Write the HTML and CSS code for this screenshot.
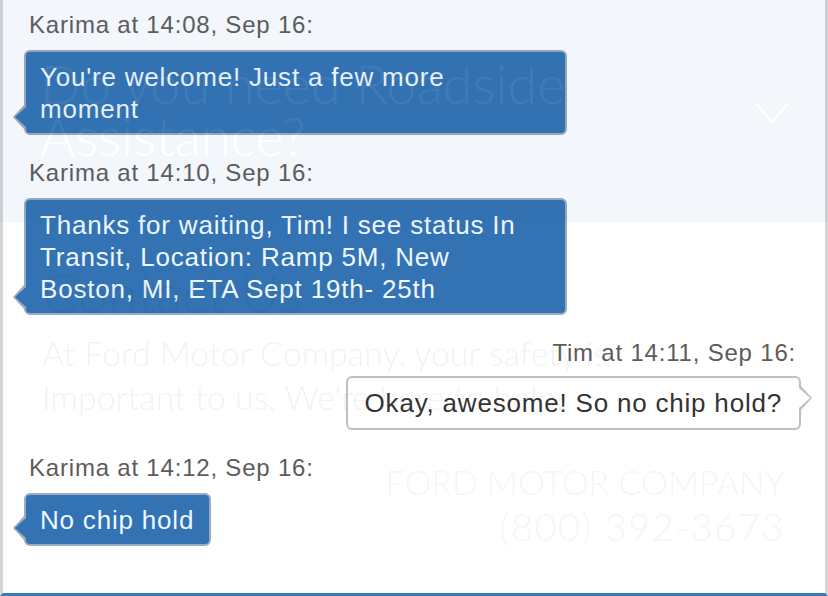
FILE: index.html
```html
<!DOCTYPE html>
<html lang="en">
<head>
  <meta charset="UTF-8" />
  <meta name="viewport" content="width=device-width, initial-scale=1.0"/>
  <title>Chat | Ford Motor Company</title>
  <link rel="stylesheet" href="styles.css">
</head>
<body>
<div class="screen">
  <main class="chat">
    <div class="msg in">
      <div class="meta">Karima at 14:08, Sep 16:</div>
      <div class="bubble">You're welcome! Just a few more moment</div>
    </div>
    <div class="msg in">
      <div class="meta">Karima at 14:10, Sep 16:</div>
      <div class="bubble">Thanks for waiting, Tim! I see status In Transit, Location: Ramp 5M, New Boston, MI, ETA Sept 19th- 25th</div>
    </div>
    <div class="msg out">
      <div class="meta">Tim at 14:11, Sep 16:</div>
      <div class="bubble">Okay, awesome! So no chip hold?</div>
    </div>
    <div class="msg in">
      <div class="meta">Karima at 14:12, Sep 16:</div>
      <div class="bubble">No chip hold</div>
    </div>
  </main>

  <!-- the page behind the chat window shows through faintly -->
  <div class="ghost" aria-hidden="true">
    <section class="ghost-hero">
      <h2>Do you need Roadside<br>Assistance?</h2>
      <svg class="chevron" width="36" height="26" viewBox="0 0 36 26">
        <polyline points="2,3 18,22 34,3" fill="none" stroke="#fff" stroke-width="2.5"/>
      </svg>
    </section>
    <section class="ghost-contact">
      <h2>Contact Us</h2>
      <p>At Ford Motor Company, your safety is<br>Important to us. We're here to help.</p>
      <div class="ghost-phone">
        <div class="company">FORD MOTOR COMPANY</div>
        <div class="phone">(800) 392-3673</div>
      </div>
    </section>
  </div>
</div>
</body>
</html>
```

FILE: styles.css
```css
* { box-sizing: border-box; margin: 0; padding: 0; }
body {
  font-family: 'Liberation Sans', Arial, sans-serif;
  background: #fff;
  color: #333;
}
.screen {
  position: relative;
  width: 828px;
  height: 596px;
  overflow: hidden;
}
.chat {
  height: 596px;
  padding: 12px 24px 0 21px;
  border-left: 3px solid #d5d5d5;
  border-right: 3px solid #d5d5d5;
  border-bottom: 3px solid #3a78b8;
  background: #fff;
}
.msg {
  display: flex;
  flex-direction: column;
  align-items: flex-start;
  margin-bottom: 25px;
}
.msg.out {
  align-items: flex-end;
}
.meta {
  font-size: 24px;
  letter-spacing: 0.8px;
  line-height: 26px;
  color: #5c5c5c;
  padding: 0 5px;
  margin-bottom: 12px;
}
.msg.out .meta {
  margin-bottom: 10px;
}
.bubble {
  position: relative;
  max-width: 543px;
  font-size: 26px;
  letter-spacing: 0.8px;
  line-height: 32px;
  padding: 9px 15px 8px 14px;
  border-radius: 6px;
}
.msg.in .bubble {
  background: #3373b3;
  border: 2px solid #9aacbd;
  color: #eef7ff;
}
.msg.out .bubble {
  background: #fff;
  border: 2px solid #bfbfbf;
  color: #333;
  padding: 9px 17px;
}

/* bubble tails */
.bubble::before,
.bubble::after {
  content: "";
  position: absolute;
  width: 0;
  height: 0;
  border-style: solid;
  border-color: transparent;
}
.msg.in .bubble::before {
  left: -13px;
  bottom: 4px;
  border-width: 12px 11px 12px 0;
  border-right-color: #9aacbd;
}
.msg.in .bubble::after {
  left: -11px;
  bottom: 6px;
  border-width: 10px 11px 10px 0;
  border-right-color: #3373b3;
}
.msg.out .bubble::before {
  right: -13px;
  top: 8px;
  border-width: 12px 0 12px 11px;
  border-left-color: #bfbfbf;
}
.msg.out .bubble::after {
  right: -11px;
  top: 10px;
  border-width: 10px 0 10px 11px;
  border-left-color: #fff;
}

/* faint website behind the chat */
.ghost {
  position: absolute;
  inset: 0;
  opacity: 0.06;
  pointer-events: none;
  font-family: Lato, 'Open Sans', sans-serif;
  font-weight: 300;
  color: #222;
}
.ghost-hero {
  height: 222px;
  background: #3769ac;
  color: #fff;
  display: flex;
  justify-content: space-between;
  padding: 58px 38px 0 40px;
}
.ghost h2 {
  font-size: 54px;
  font-weight: 300;
  line-height: 52px;
}
.chevron {
  margin-top: 42px;
}
.ghost-contact {
  padding: 45px 43px 0 42px;
}
.ghost-contact p {
  font-size: 34px;
  line-height: 44px;
  margin-top: 12px;
}
.ghost-phone {
  margin-top: 41px;
  text-align: right;
  color: #555;
}
.company {
  font-size: 34px;
  line-height: 44px;
}
.phone {
  font-size: 38px;
  letter-spacing: 1.5px;
  line-height: 44px;
}
```
